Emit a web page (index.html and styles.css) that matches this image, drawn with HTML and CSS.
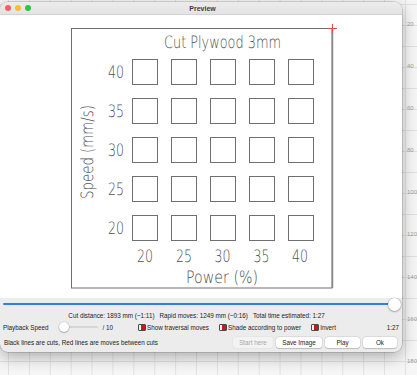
FILE: index.html
```html
<!DOCTYPE html>
<html lang="en">
<head>
  <meta charset="UTF-8">
  <title>Preview</title>
  <link rel="stylesheet" href="styles.css">
</head>
<body>
  <div class="window">
    <div class="titlebar">
      <div class="lights">
        <span class="light red"></span>
        <span class="light yellow"></span>
        <span class="light green"></span>
      </div>
      <div class="title">Preview</div>
    </div>

    <div class="canvas">
      <svg class="drawing" width="402" height="283" viewBox="0 0 402 283" xmlns="http://www.w3.org/2000/svg">
        <rect x="71.5" y="13.5" width="260.5" height="259.5" fill="none" stroke="#6f6f6f" stroke-width="1"/>
        <line x1="332.5" y1="14" x2="332.5" y2="273" stroke="#8a8a8a" stroke-width="1.5"/>
        <path d="M328 13.5H337M332.5 9V18" stroke="#f04a4a" stroke-width="1"/>

        <g class="label">
          <text x="222.5" y="33" text-anchor="middle" textLength="117" lengthAdjust="spacingAndGlyphs">Cut Plywood 3mm</text>

          <text x="124" y="63" text-anchor="end" textLength="16" lengthAdjust="spacingAndGlyphs">40</text>
          <text x="124" y="102" text-anchor="end" textLength="16" lengthAdjust="spacingAndGlyphs">35</text>
          <text x="124" y="141" text-anchor="end" textLength="16" lengthAdjust="spacingAndGlyphs">30</text>
          <text x="124" y="180" text-anchor="end" textLength="16" lengthAdjust="spacingAndGlyphs">25</text>
          <text x="124" y="219" text-anchor="end" textLength="16" lengthAdjust="spacingAndGlyphs">20</text>

          <text x="145" y="247" text-anchor="middle" textLength="16" lengthAdjust="spacingAndGlyphs">20</text>
          <text x="184" y="247" text-anchor="middle" textLength="16" lengthAdjust="spacingAndGlyphs">25</text>
          <text x="222.5" y="247" text-anchor="middle" textLength="16" lengthAdjust="spacingAndGlyphs">30</text>
          <text x="261.5" y="247" text-anchor="middle" textLength="16" lengthAdjust="spacingAndGlyphs">35</text>
          <text x="300" y="247" text-anchor="middle" textLength="16" lengthAdjust="spacingAndGlyphs">40</text>

          <text x="222" y="268" text-anchor="middle" textLength="72" lengthAdjust="spacingAndGlyphs">Power (%)</text>
          <text transform="translate(93 137) rotate(-90)" text-anchor="middle" textLength="94" lengthAdjust="spacingAndGlyphs">Speed (mm/s)</text>
        </g>

        <g class="cells" fill="none" stroke="#6f6f6f" stroke-width="1">
          <rect x="132.5" y="44.5" width="25" height="25"/>
          <rect x="171.5" y="44.5" width="25" height="25"/>
          <rect x="210.5" y="44.5" width="25" height="25"/>
          <rect x="249.5" y="44.5" width="25" height="25"/>
          <rect x="288.5" y="44.5" width="25" height="25"/>

          <rect x="132.5" y="83.5" width="25" height="25"/>
          <rect x="171.5" y="83.5" width="25" height="25"/>
          <rect x="210.5" y="83.5" width="25" height="25"/>
          <rect x="249.5" y="83.5" width="25" height="25"/>
          <rect x="288.5" y="83.5" width="25" height="25"/>

          <rect x="132.5" y="122.5" width="25" height="25"/>
          <rect x="171.5" y="122.5" width="25" height="25"/>
          <rect x="210.5" y="122.5" width="25" height="25"/>
          <rect x="249.5" y="122.5" width="25" height="25"/>
          <rect x="288.5" y="122.5" width="25" height="25"/>

          <rect x="132.5" y="161.5" width="25" height="25"/>
          <rect x="171.5" y="161.5" width="25" height="25"/>
          <rect x="210.5" y="161.5" width="25" height="25"/>
          <rect x="249.5" y="161.5" width="25" height="25"/>
          <rect x="288.5" y="161.5" width="25" height="25"/>

          <rect x="132.5" y="200.5" width="25" height="25"/>
          <rect x="171.5" y="200.5" width="25" height="25"/>
          <rect x="210.5" y="200.5" width="25" height="25"/>
          <rect x="249.5" y="200.5" width="25" height="25"/>
          <rect x="288.5" y="200.5" width="25" height="25"/>
        </g>
      </svg>
    </div>

    <div class="controls">
      <div class="progress">
        <div class="progress-track"></div>
        <div class="progress-thumb"></div>
      </div>

      <div class="stats">
        <span>Cut distance: 1893 mm (~1:11)</span>
        <span>Rapid moves: 1249 mm (~0:16)</span>
        <span>Total time estimated: 1:27</span>
      </div>

      <div class="options">
        <span class="speed-label">Playback Speed</span>
        <div class="speed-slider">
          <div class="speed-thumb"></div>
        </div>
        <span class="speed-max">/ 10</span>
        <label class="toggle traversal"><span class="switch"></span>Show traversal moves</label>
        <label class="toggle shade"><span class="switch"></span>Shade according to power</label>
        <label class="toggle invert"><span class="switch"></span>Invert</label>
        <span class="elapsed">1:27</span>
      </div>

      <div class="footer">
        <span class="legend">Black lines are cuts, Red lines are moves between cuts</span>
        <div class="buttons">
          <button class="btn disabled">Start here</button>
          <button class="btn save">Save Image</button>
          <button class="btn play">Play</button>
          <button class="btn ok">Ok</button>
        </div>
      </div>
    </div>
  </div>

  <div class="ruler">
    <span>20</span>
    <span>40</span>
    <span>60</span>
    <span>80</span>
    <span>100</span>
    <span>120</span>
    <span>140</span>
    <span>160</span>
    <span>180</span>
  </div>
</body>
</html>
```

FILE: styles.css
```css
:root {
  --grid-bg: #f6f6f6;
  --grid-line: #e1e1e1;
  --panel: #ececec;
  --ink: #4e4e4e;
  --accent: #2f7df6;
}

html, body {
  margin: 0;
  padding: 0;
}

body {
  width: 417px;
  height: 375px;
  overflow: hidden;
  display: flex;
  align-items: flex-start;
  font-family: 'Liberation Sans', Arial, sans-serif;
  color: #222;
  background-color: var(--grid-bg);
  background-image:
    linear-gradient(to right, var(--grid-line) 1px, transparent 1px),
    linear-gradient(to bottom, var(--grid-line) 1px, transparent 1px);
  background-size: 20.9px 21px, 20.9px 21px;
  background-position: 8px 4px, 8px 4px;
}

/* window */

.window {
  flex: 0 0 402px;
  width: 402px;
  height: 350px;
  margin-top: 2px;
  border-radius: 8px;
  overflow: hidden;
  display: flex;
  flex-direction: column;
  background: var(--panel);
  box-shadow: 0 0 0 0.5px rgba(0, 0, 0, 0.25), 0 5px 16px rgba(0, 0, 0, 0.3);
}

.titlebar {
  height: 13px;
  flex: 0 0 13px;
  display: flex;
  align-items: center;
  background: linear-gradient(#ececec, #e3e3e3);
  border-bottom: 1px solid #d3d3d3;
  box-sizing: border-box;
}

.lights {
  display: flex;
  gap: 4px;
  padding-left: 5px;
}

.light {
  width: 6px;
  height: 6px;
  border-radius: 50%;
}

.light.red { background: #fe5f57; }
.light.yellow { background: #febc2e; }
.light.green { background: #28c840; }

.title {
  flex: 1;
  text-align: center;
  margin-left: -28px;
  font-size: 7px;
  font-weight: 700;
  color: #3c3c3c;
}

.canvas {
  flex: 0 0 283px;
  height: 283px;
  background: #fff;
}

.drawing {
  display: block;
}

.label text {
  font-family: 'DejaVu Sans', sans-serif;
  font-weight: 200;
  font-size: 17px;
  fill: var(--ink);
  text-rendering: geometricPrecision;
}

/* controls */

.controls {
  flex: 1;
  display: flex;
  flex-direction: column;
  font-size: 6.3px;
}

.progress {
  height: 12px;
  display: flex;
  align-items: center;
  padding-left: 3px;
}

.progress-track {
  width: 388px;
  height: 2px;
  border-radius: 1px;
  background: var(--accent);
}

.progress-thumb {
  width: 13px;
  height: 13px;
  margin-left: -3px;
  border-radius: 50%;
  background: #fff;
  box-shadow: 0 0 0 0.5px rgba(0, 0, 0, 0.2), 0 1px 2px rgba(0, 0, 0, 0.25);
}

.stats {
  height: 10px;
  display: flex;
  justify-content: center;
  align-items: center;
  gap: 5px;
  padding-right: 9px;
}

.options {
  height: 12px;
  margin-top: 1px;
  display: flex;
  align-items: center;
}

.speed-label {
  margin-left: 3px;
}

.speed-slider {
  width: 39px;
  height: 2px;
  margin-left: 10px;
  border-radius: 1px;
  background: #d6d6d6;
  display: flex;
  align-items: center;
}

.speed-thumb {
  width: 10px;
  height: 10px;
  border-radius: 50%;
  background: #fff;
  box-shadow: 0 0 0 0.5px rgba(0, 0, 0, 0.18), 0 1px 1.5px rgba(0, 0, 0, 0.2);
}

.speed-max {
  margin-left: 5px;
}

.toggle {
  display: flex;
  align-items: center;
}

.switch {
  width: 6px;
  height: 5px;
  margin-right: 1px;
  border: 1px solid #4a4a4a;
  border-radius: 1px;
  background: linear-gradient(to right, #f4f4f4 35%, #d2151b 35%);
}

.traversal { margin-left: 25px; }
.shade { margin-left: 10px; }
.invert { margin-left: 10px; }

.elapsed {
  margin-left: auto;
  margin-right: 3px;
}

.footer {
  height: 14px;
  margin-top: 2px;
  display: flex;
  align-items: center;
  justify-content: space-between;
}

.legend {
  margin-left: 4px;
}

.buttons {
  display: flex;
  gap: 3px;
  margin-right: 5px;
}

.btn {
  height: 11px;
  padding: 0;
  border: none;
  border-radius: 3px;
  background: #fff;
  font-family: 'Liberation Sans', Arial, sans-serif;
  font-size: 6.3px;
  color: #222;
  box-shadow: 0 0 0 0.5px rgba(0, 0, 0, 0.12), 0 0.5px 1px rgba(0, 0, 0, 0.15);
}

.btn.disabled {
  width: 40px;
  color: #a8a8a8;
  background: #f3f3f3;
  box-shadow: 0 0 0 0.5px rgba(0, 0, 0, 0.05);
}

.btn.save { width: 46px; }
.btn.play { width: 35px; }
.btn.ok { width: 34px; }

/* ruler behind the window */

.ruler {
  flex: 1;
  height: 375px;
  overflow: hidden;
  display: flex;
  flex-direction: column;
  box-sizing: border-box;
  padding-top: 19px;
  padding-left: 5px;
  font-size: 6px;
  color: #9a9a9a;
  white-space: nowrap;
}

.ruler span {
  flex: 0 0 42.1px;
  line-height: 10px;
}
```
